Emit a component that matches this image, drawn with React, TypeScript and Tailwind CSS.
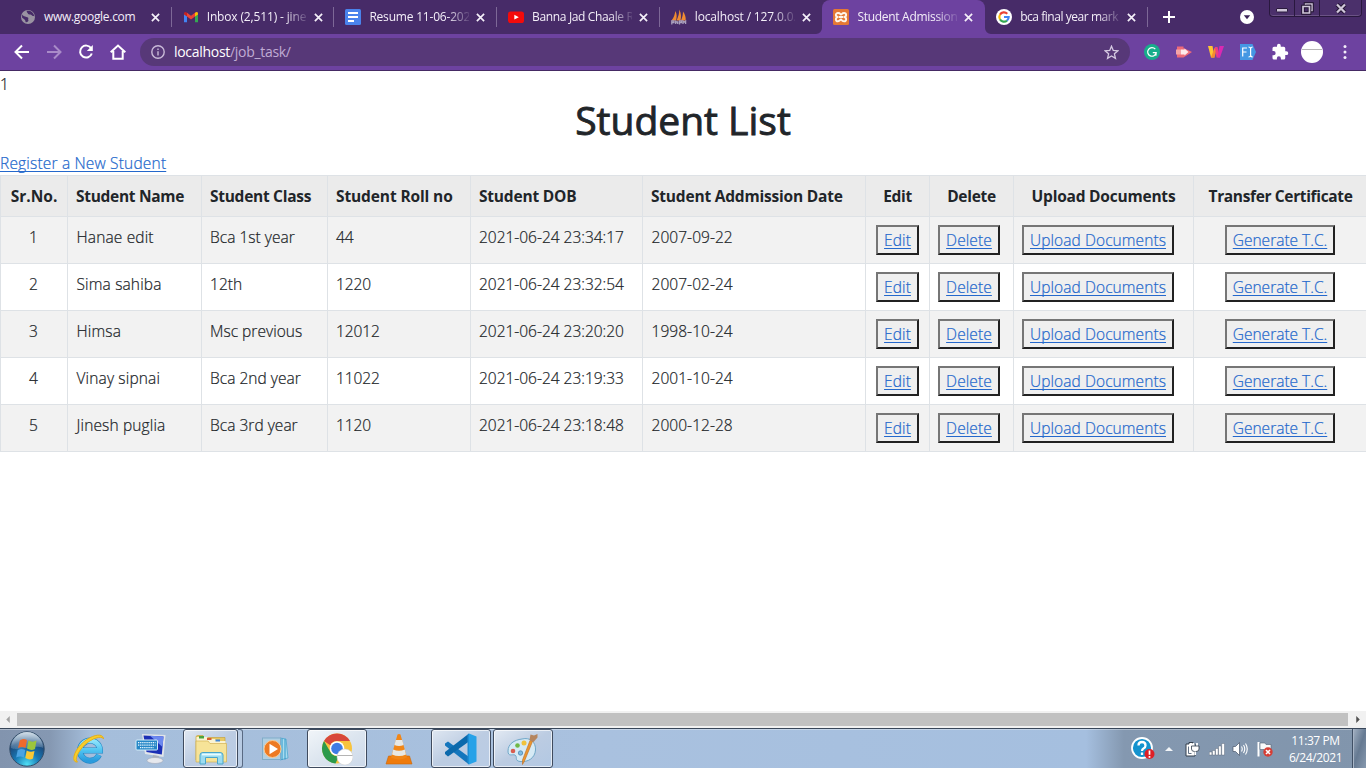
import React from "react";

type IconProps = { className?: string };

const CloseX = () => (
  <svg viewBox="0 0 10 10" className="h-[9px] w-[9px] shrink-0" fill="none" stroke="#f4eff9" strokeWidth="1.9">
    <path d="M1 1L9 9M9 1L1 9" />
  </svg>
);

const Globe = () => (
  <svg viewBox="0 0 16 16" className="h-4 w-4 shrink-0">
    <circle cx="8" cy="8" r="7" fill="#9a93a2" />
    <path d="M2.2 5.5C4 8 6 7.500 8 8.500C9 9.500 7.500 10.500 8.500 11.500C8 13 6.500 13.500 5.500 13C6 11 3.500 10 2 8.500Z" fill="#472b68" />
    <path d="M7 1.800C6 3.500 8 3.500 8 5C9.500 6 10.500 4.500 12 6.500C13 7.500 13.500 6.500 14.300 7.500C14 4 11.500 2 9 1.700Z" fill="#472b68" />
  </svg>
);

const Gmail = () => (
  <svg viewBox="0 0 16 16" className="h-4 w-4 shrink-0">
    <path d="M1 4.500V13.200H4V6.800Z" fill="#4285f4" />
    <path d="M15 4.500V13.200H12V6.800Z" fill="#34a853" />
    <path d="M4 3.800L8 6.800L12 3.800V7.600L8 10.600L4 7.600Z" fill="#ea4335" />
    <path d="M1 4.600C1 2.600 2.800 2.600 4 3.800V7.600L1 5.600Z" fill="#c5221f" />
    <path d="M15 4.600C15 2.600 13.200 2.600 12 3.800V7.600L15 5.600Z" fill="#fbbc04" />
  </svg>
);

const Docs = () => (
  <svg viewBox="0 0 16 16" className="h-4 w-4 shrink-0">
    <rect width="16" height="16" rx="1.5" fill="#4a83ec" />
    <path d="M3 4H13M3 8H13M3 12H9" stroke="#fff" strokeWidth="1.800" />
  </svg>
);

const Youtube = () => (
  <svg viewBox="0 0 16 16" className="h-4 w-4 shrink-0">
    <rect y="2.500" width="16" height="11.500" rx="2.600" fill="#f30b0b" />
    <path d="M6.300 5.800L10.800 8.200L6.300 10.600Z" fill="#fff" />
  </svg>
);

const PhpMyAdmin = () => (
  <svg viewBox="0 0 16 16" className="h-4 w-4 shrink-0">
    <path d="M0.500 11.500C3 8.500 4 5 4.300 2C6 5 6 8 5 11.500ZM5.500 11.500C7.500 7.500 8.300 4 8.300 0.500C10.300 4.500 10.300 8 9.500 11.500ZM10 11.500C11.500 8 12 5 12 2.500C14 5 15 8 14.700 11.500Z" fill="#ef8b32" />
    <path d="M0.800 15.500V12H3V13.700H1M4.700 11.500V15M4.700 13H6.700V15M8.500 15.500V12H10.500V13.700H8.700M12 15V12L13.300 13L14.600 12V15" stroke="#aaa1bd" strokeWidth="1.300" fill="none" />
  </svg>
);

const Xampp = () => (
  <svg viewBox="0 0 16 16" className="h-4 w-4 shrink-0">
    <rect width="16" height="16" rx="1.500" fill="#e57834" />
    <path d="M5.500 8C1.800 8 2.300 4 5 4S7 5.500 8 5.500S9 4 11 4C13.700 4 14.200 8 10.500 8C14.200 8 13.700 12.300 11 12.300S9 10.500 8 10.500S7 12.300 5 12.300C2.300 12.300 1.800 8 5.500 8ZM6 8H10" fill="none" stroke="#fff6ea" strokeWidth="1.900" />
  </svg>
);

const Google = () => (
  <svg viewBox="0 0 16 16" className="h-4 w-4 shrink-0">
    <circle cx="8" cy="8" r="8" fill="#fff" />
    <g fill="none" strokeWidth="2.100">
      <path d="M4 5.600A4.700 4.700 0 0 1 11.300 4.700" stroke="#ea4335" />
      <path d="M4 10.400A4.700 4.700 0 0 1 4 5.600" stroke="#fbbc05" />
      <path d="M11 11.600A4.700 4.700 0 0 1 4 10.400" stroke="#34a853" />
      <path d="M8 8H12.700A4.700 4.700 0 0 1 11 11.600" stroke="#4285f4" />
    </g>
  </svg>
);

type TabInfo = { title: string; icon: React.ReactNode; active?: boolean; tracking: string; noFade?: boolean; noSep?: boolean };

const tabs: TabInfo[] = [
  { title: "www.google.com", icon: <Globe />, tracking: "tracking-[-0.3px]", noFade: true },
  { title: "Inbox (2,511) - jine", icon: <Gmail />, tracking: "tracking-[-0.15px]" },
  { title: "Resume 11-06-202", icon: <Docs />, tracking: "tracking-[-0.2px]" },
  { title: "Banna Jad Chaale R", icon: <Youtube />, tracking: "tracking-[-0.35px]" },
  { title: "localhost / 127.0.0.", icon: <PhpMyAdmin />, tracking: "tracking-[-0.15px]", noSep: true },
  { title: "Student Admission", icon: <Xampp />, tracking: "tracking-[-0.3px]", active: true, noSep: true },
  { title: "bca final year mark", icon: <Google />, tracking: "tracking-[-0.45px]" },
];

function Tab({ tab }: { tab: TabInfo }) {
  return (
    <div className={`relative flex h-[34px] w-[162.7px] shrink-0 items-center pl-[11px] ${tab.active ? "rounded-t-lg bg-[#6d42a0]" : ""}`}>
      {tab.active && (
        <>
          <svg viewBox="0 0 6 6" className="absolute bottom-0 -left-[6px] h-[6px] w-[6px]"><path d="M6 0V6H0A6 6 0 0 0 6 0Z" fill="#6d42a0" /></svg>
          <svg viewBox="0 0 6 6" className="absolute -right-[6px] bottom-0 h-[6px] w-[6px]"><path d="M0 0V6H6A6 6 0 0 1 0 0Z" fill="#6d42a0" /></svg>
        </>
      )}
      {tab.icon}
      <span
        className={`mr-[7px] ml-[8px] w-[100px] text-[12px] leading-4 whitespace-nowrap text-[#f3eef8] ${tab.tracking} ${
          tab.noFade ? "" : "[mask-image:linear-gradient(to_right,black_78%,transparent_103%)]"
        }`}
      >
        {tab.title}
      </span>
      <CloseX />
      {!tab.noSep && <span className="mr-0 ml-auto h-[20px] w-px bg-[#7d6897]" />}
    </div>
  );
}

function TabStrip() {
  return (
    <div className="flex h-[34px] items-center bg-[#472b68] pl-[9px]">
      {tabs.map((t) => <Tab key={t.title} tab={t} />)}
      <svg viewBox="0 0 12 12" className="ml-[15px] h-3 w-3" stroke="#fff" strokeWidth="2"><path d="M6 0V12M0 6H12" /></svg>
      <svg viewBox="0 0 14 14" className="ml-[65px] h-[14px] w-[14px]"><circle cx="7" cy="7" r="7" fill="#fff" /><path d="M3.800 5.300H10.200L7 9.200Z" fill="#3b2358" /></svg>
      <div className="ml-[15.500px] flex h-[17px] w-[93px] self-start rounded-b-[4px] border border-t-0 border-[#29183e] bg-[#4b306b] shadow-[inset_0_-1px_0_#6b5385]">
        <div className="flex w-[25px] items-center justify-center border-r border-[#29183e]">
          <svg viewBox="0 0 12 12" className="h-3 w-3"><rect x="0.500" y="6.500" width="11" height="3.500" rx="0.500" fill="#d0c7da" stroke="#2b1b3e" /></svg>
        </div>
        <div className="flex w-[25px] items-center justify-center border-r border-[#29183e]">
          <svg viewBox="0 0 13 13" className="h-[13px] w-[13px]"><g fill="none"><path d="M4.500 2H11V8.500H4.500Z" stroke="#20132f" strokeWidth="3.500" /><path d="M4.500 2H11V8.500H4.500Z" stroke="#cfc6d9" strokeWidth="1.500" /><path d="M2 4.500H8.500V11H2Z" fill="#472b68" stroke="#20132f" strokeWidth="3.500" /><path d="M2 4.500H8.500V11H2Z" stroke="#cfc6d9" strokeWidth="1.700" /></g></svg>
        </div>
        <div className="flex flex-1 items-center justify-center">
          <svg viewBox="0 0 12 11" className="h-[11px] w-3" fill="none"><path d="M2 1.500L10 9.500M10 1.500L2 9.500" stroke="#20132f" strokeWidth="4" /><path d="M2 1.500L10 9.500M10 1.500L2 9.500" stroke="#d0c7da" strokeWidth="2.300" /></svg>
        </div>
      </div>
    </div>
  );
}

function Toolbar() {
  return (
    <div className="flex h-[37px] items-center border-b border-[#452a64] bg-[#6d42a0]">
      <svg viewBox="0 0 16 16" className="ml-[14px] h-4 w-4" fill="none" stroke="#fff" strokeWidth="2"><path d="M15 8H2M8 1.500L1.500 8L8 14.500" /></svg>
      <svg viewBox="0 0 16 16" className="ml-4 h-4 w-4" fill="none" stroke="#a98bc8" strokeWidth="2"><path d="M1 8H14M8 1.500L14.500 8L8 14.500" /></svg>
      <svg viewBox="0 0 16 16" className="ml-4 h-4 w-4" fill="none" stroke="#fff" strokeWidth="2"><path d="M13.200 4.400A6 6 0 1 0 13.800 9.500" /><path d="M14.800 1V7H8.800Z" fill="#fff" stroke="none" /></svg>
      <svg viewBox="0 0 16 16" className="ml-4 h-4 w-4" fill="none" stroke="#fff" strokeWidth="2"><path d="M0.700 8.300L8 1.500L15.300 8.300M3.300 7V14.700H12.700V7" /></svg>
      <div className="ml-[14px] flex h-7 w-[990px] items-center rounded-full bg-[#573878] pr-[11px] pl-[11px]">
        <svg viewBox="0 0 14 14" className="h-[14px] w-[14px]" fill="none" stroke="#c9bad8" strokeWidth="1.400"><circle cx="7" cy="7" r="6.200" /><path d="M7 6.200V10.500M7 3.500V5" /></svg>
        <span className="ml-[9px] text-[14px] leading-5 tracking-[-0.3px] text-[#fff]">localhost<span className="text-[#c0abd4]">/job_task/</span></span>
        <svg viewBox="0 0 16 16" className="ml-auto h-[15px] w-[15px]" fill="none" stroke="#d5c9e1" strokeWidth="1.400"><path d="M8 1.300L9.900 5.800L14.800 6.200L11.100 9.400L12.200 14.200L8 11.700L3.800 14.200L4.900 9.400L1.200 6.200L6.100 5.800Z" /></svg>
      </div>
      <svg viewBox="0 0 16 16" className="ml-[14px] h-4 w-4"><circle cx="8" cy="8" r="8" fill="#17ad8b" /><path d="M11.300 5.200A4.300 4.300 0 1 0 12.200 8.700H8.800M12.200 8.500L11.900 11.800" fill="none" stroke="#fff" strokeWidth="1.200" /></svg>
      <svg viewBox="0 0 16 16" className="ml-4 h-4 w-4"><path d="M1 2.500H7.500V4L16 8L7.500 13.500H1Z" fill="#ee6a78" /><rect x="0" y="5.500" width="5" height="5" fill="#f5a3a7" /><path d="M5 5.500H8.500V4.500L12.500 8L8.500 11.500V10.500H5Z" fill="#ffe9ea" /></svg>
      <svg viewBox="0 0 16 16" className="ml-4 h-4 w-4"><path d="M0 2H4.500L6.500 13.500H3Z" fill="#ffc531" /><path d="M6.500 13.500L9 4H6.500L3 13.500Z" fill="#f88b2e" /><path d="M6.800 3H9.500L12 13.500H8.500Z" fill="#ee3f7e" /><path d="M11.500 2H16L12 13.500H9.500Z" fill="#d929b2" /></svg>
      <svg viewBox="0 0 16 16" className="ml-4 h-4 w-4"><path d="M0 0H12.500L16 8L12.500 16H0Z" fill="#4597e3" /><path d="M2.700 12.500V4H7M2.700 8H6.500M8.500 3Q10.300 3 10.600 4.500Q11 3 12.700 3M10.600 4.500V12M8.500 13Q10.300 13 10.600 11.500Q11 13 12.700 13" fill="none" stroke="#fff" strokeWidth="1.200" /></svg>
      <svg viewBox="0 0 24 24" className="ml-[15px] h-[18px] w-[18px]" fill="#fff"><path d="M20.500 11H19V7a2 2 0 0 0-2-2h-4V3.500a2.500 2.500 0 0 0-5 0V5H4a2 2 0 0 0-2 2v3.800h1.500a2.700 2.700 0 0 1 0 5.400H2V20a2 2 0 0 0 2 2h3.800v-1.500a2.700 2.700 0 0 1 5.400 0V22H17a2 2 0 0 0 2-2v-4h1.500a2.500 2.500 0 0 0 0-5Z" /></svg>
      <svg viewBox="0 0 22 22" className="ml-3 h-[22px] w-[22px]"><circle cx="11" cy="11" r="11" fill="#fff" /><path d="M1 8.500H21" stroke="#b6b6b6" /></svg>
      <svg viewBox="0 0 4 16" className="ml-[20px] h-4 w-1" fill="#f4eef9"><circle cx="2" cy="2.500" r="1.500" /><circle cx="2" cy="8" r="1.500" /><circle cx="2" cy="13.500" r="1.500" /></svg>
    </div>
  );
}

const students = [
  ["1", "Hanae edit", "Bca 1st year", "44", "2021-06-24 23:34:17", "2007-09-22"],
  ["2", "Sima sahiba", "12th", "1220", "2021-06-24 23:32:54", "2007-02-24"],
  ["3", "Himsa", "Msc previous", "12012", "2021-06-24 23:20:20", "1998-10-24"],
  ["4", "Vinay sipnai", "Bca 2nd year", "11022", "2021-06-24 23:19:33", "2001-10-24"],
  ["5", "Jinesh puglia", "Bca 3rd year", "1120", "2021-06-24 23:18:48", "2000-12-28"],
];

const headers = [
  { label: "Sr.No.", cls: "w-[67px] text-center tracking-[0px]" },
  { label: "Student Name", cls: "w-[134px] text-left tracking-[-0.3px]" },
  { label: "Student Class", cls: "w-[126px] text-left tracking-[-0.28px]" },
  { label: "Student Roll no", cls: "w-[143px] text-left tracking-[-0.12px]" },
  { label: "Student DOB", cls: "w-[172px] text-left tracking-[-0.2px]" },
  { label: "Student Addmission Date", cls: "w-[223px] text-left tracking-[-0.2px]" },
  { label: "Edit", cls: "w-[64px] text-center tracking-[-0.3px]" },
  { label: "Delete", cls: "w-[84px] text-center tracking-[-0.3px]" },
  { label: "Upload Documents", cls: "w-[180px] text-center tracking-[-0.22px]" },
  { label: "Transfer Certificate", cls: "w-[174px] text-center tracking-[-0.35px]" },
];

const columnClasses = [
  "pr-2 pl-[7px] text-center",
  "pr-2 pl-[8.5px] tracking-[0.15px]",
  "px-2 tracking-[0.03px]",
  "px-2 tracking-[-0.1px]",
  "px-2 tracking-[-0.02px]",
  "pr-2 pl-[8.5px] tracking-[0.05px]",
];

const actions = [
  { label: "Edit", width: "w-[43px]", cell: "px-0 text-center tracking-[0.1px]" },
  { label: "Delete", width: "w-[62px]", cell: "pl-2 text-left tracking-[0.1px]" },
  { label: "Upload Documents", width: "w-[152px]", cell: "pl-2 text-left tracking-[0.08px]" },
  { label: "Generate T.C.", width: "w-[110px]", cell: "pr-[1px] text-center" },
];

function StudentTable() {
  return (
    <table className="w-[1367px] table-fixed border-separate border-spacing-0 border-b border-[#dee2e6] text-[15.5px] leading-6 whitespace-nowrap">
      <thead>
        <tr className="h-[41px] bg-[#ebebeb]">
          {headers.map((h) => (
            <th key={h.label} className={`border-t border-l border-[#dee2e6] p-0 font-bold ${h.cls}`}>
              <div className="-mx-1 px-3">{h.label}</div>
            </th>
          ))}
        </tr>
      </thead>
      <tbody>
        {students.map((s) => (
          <tr key={s[0]} className="h-[47px] align-top font-light odd:bg-[#f2f2f2] [-webkit-text-stroke:0.22px_currentColor]">
            {s.map((v, i) => (
              <td key={i} className={`border-t border-l border-[#dee2e6] py-2 ${columnClasses[i]}`}>{v}</td>
            ))}
            {actions.map((a) => (
              <td key={a.label} className={`border-t border-l border-[#dee2e6] py-2 ${a.cell}`}>
                <button className={`inline-flex h-[30px] items-center justify-center border-2 border-t-[#767676] border-r-[#212121] border-b-[#212121] border-l-[#767676] bg-[#efefef] align-top [letter-spacing:inherit] ${a.width}`}>
                  <a className="text-[#2468cc] underline decoration-1 underline-offset-2 [text-decoration-skip-ink:none]">{a.label}</a>
                </button>
              </td>
            ))}
          </tr>
        ))}
      </tbody>
    </table>
  );
}

function Page() {
  return (
    <main className="h-[640px] overflow-hidden bg-white text-[#212529]">
      <p className="h-[25px] pt-px text-[15.5px] leading-6 font-light [-webkit-text-stroke:0.22px_currentColor]">1</p>
      <h1 className="h-[48px] text-center text-[39px] leading-[48px] font-medium [-webkit-text-stroke:0.9px_#212529]">Student List</h1>
      <p className="h-[31px] pt-[7px] text-[15.5px] leading-6 font-light tracking-[0.18px] [-webkit-text-stroke:0.22px_#2468cc]">
        <a className="text-[#2468cc] underline decoration-1 underline-offset-2 [text-decoration-skip-ink:none]">Register a New Student</a>
      </p>
      <StudentTable />
    </main>
  );
}

function ScrollBar() {
  return (
    <div className="flex h-[17px] items-center bg-[#f1f1f1] pl-[6px]">
      <svg viewBox="0 0 4 8" className="h-[7px] w-1" fill="#a3a3a3"><path d="M4 0V8L0 4Z" /></svg>
      <div className="ml-[7px] h-[13px] w-[1331px] bg-[#c1c1c1]" />
      <svg viewBox="0 0 4 8" className="ml-2 h-[7px] w-1" fill="#505050"><path d="M0 0V8L4 4Z" /></svg>
    </div>
  );
}

const StartOrb = () => (
  <svg viewBox="0 0 36 36" className="h-9 w-9">
    <defs>
      <radialGradient id="orb" cx=".5" cy=".95" r=".9"><stop offset="0" stopColor="#4fe0f5" /><stop offset=".4" stopColor="#1879b5" /><stop offset=".75" stopColor="#1c4a7c" /><stop offset="1" stopColor="#7593b1" /></radialGradient>
      <linearGradient id="gloss" x2="0" y2="1"><stop stopColor="#e1ebf2" stopOpacity=".85" /><stop offset="1" stopColor="#a3bdd1" stopOpacity=".25" /></linearGradient>
    </defs>
    <circle cx="18" cy="18" r="17.200" fill="url(#orb)" stroke="#334d68" />
    <path d="M2 17A16 16 0 0 1 34 17C25 13 11 21 2 17Z" fill="url(#gloss)" />
    <path d="M10.800 9.500C13.500 7.500 15.500 7.500 18 9L16.500 17C14 15.500 12 15.800 9 17Z" fill="#ef6a2c" />
    <path d="M19.500 9.500C22 11 25 11 27.500 9.500L26 18C23 19.500 21 19 18 17.500Z" fill="#9cc63c" />
    <path d="M8.700 19C11.500 17.500 14 17.700 16.300 19L14.800 26.500C12 25 10 25.200 7.200 26.500Z" fill="#4ba3e2" />
    <path d="M17.700 19.500C20.500 21 22.500 21.200 25.500 20L24 27.500C21.500 29 19 28.500 16.300 27Z" fill="#fbc834" />
  </svg>
);

const Explorer = () => (
  <svg viewBox="0 0 32 32" className="h-8 w-8">
    <defs><linearGradient id="ie" x2="0" y2="1"><stop stopColor="#8fe4fb" /><stop offset=".5" stopColor="#4fc3f0" /><stop offset="1" stopColor="#2a9bdd" /></linearGradient></defs>
    <path d="M26 22A10 10 0 1 1 27 17.500H9" fill="none" stroke="#2386c4" strokeWidth="6" />
    <path d="M26 22A10 10 0 1 1 27 17.500H9" fill="none" stroke="url(#ie)" strokeWidth="4.800" />
    <path d="M4.500 29C-2 30 0 18 10.500 9C20 1 30.500 0 30.500 6C29.500 2.500 20 4.500 12 11.500C5 18.500 1 27 4.500 29Z" fill="#f9ce27" stroke="#e4ae1b" strokeWidth="1" />
  </svg>
);

const Keyboard = () => (
  <svg viewBox="0 0 32 32" className="h-8 w-8">
    <path d="M7 1L30.500 2L28.500 24L10 21Z" fill="#e1e4e8" />
    <path d="M8.500 2.500L28.500 3.500L26.800 21.500L11.500 19Z" fill="#1b2fb5" />
    <path d="M15 2.800L28.500 3.500L27.500 14Z" fill="#6c89f0" />
    <path d="M18 22L24 23L23 27L17 26Z" fill="#aab1bc" />
    <ellipse cx="20" cy="27.500" rx="8" ry="3" fill="#e6e8ed" stroke="#a2aab8" strokeWidth=".6" />
    <rect x="1" y="7" width="21.500" height="10" rx="1" fill="#2587c7" stroke="#d2edfa" />
    <path d="M3 9.700H20.500M3 12.200H20.500M5 14.700H18.500" stroke="#f0fbff" strokeWidth="1.300" strokeDasharray="1.300 .8" />
  </svg>
);

const FolderIcon = () => (
  <svg viewBox="0 0 32 32" className="h-8 w-8">
    <path d="M1 4Q1 2.500 3 2.500H8L9 4.500H30V27H1Z" fill="#e8c964" stroke="#c7a33e" strokeWidth=".7" />
    <path d="M1.500 4H12L13.500 6H20L21.500 8H30.500V12H1.500Z" fill="#faf3d2" />
    <path d="M4 3H9V5.500H4Z" fill="#4aa53e" /><path d="M12 5H16.500V7H12Z" fill="#d85c30" /><path d="M20.500 6.500H25V8.500H20.500Z" fill="#4387d4" />
    <path d="M1 8H13L15 10.500H31.500V29H1Z" fill="#f6e398" stroke="#d4b252" strokeWidth=".7" />
    <path d="M5 31V22Q5 19.500 8 19.500H25Q28 19.500 28 22V31H22.500V24.500H10.500V31Z" fill="#9bdcf1" stroke="#4ba6ca" />
    <path d="M7 21.500H26" stroke="#e8fbff" strokeWidth="1.800" />
  </svg>
);

const MediaPlayer = () => (
  <svg viewBox="0 0 32 32" className="h-8 w-8">
    <path d="M21 5L27 6L29 25L21 27Z" fill="#a7dbef" stroke="#44a2cc" strokeWidth=".7" />
    <path d="M23 5.500V27M26 6V26.500" stroke="#2891c4" strokeWidth=".9" />
    <rect x="3.500" y="5" width="18" height="21.500" fill="#b1cfe2" stroke="#80adc9" />
    <circle cx="13.500" cy="16" r="8.500" fill="#ed7a23" stroke="#fbca91" />
    <path d="M10.500 10.800L19 16L10.500 21.200Z" fill="#fff" />
  </svg>
);

const Chrome = () => (
  <svg viewBox="0 0 32 32" className="h-8 w-8">
    <circle cx="16" cy="15.500" r="15" fill="#f8c33d" />
    <path d="M3 8A15 15 0 0 1 29 8H16A7.500 7.500 0 0 0 9.300 12.300Z" fill="#d8483b" />
    <path d="M3 8L9.500 19.300A7.500 7.500 0 0 0 18 22.700L14.500 30.500A15 15 0 0 1 3 8Z" fill="#2c9a4b" />
    <circle cx="16" cy="15.500" r="7.300" fill="#fff" /><circle cx="16" cy="15.500" r="5.800" fill="#3e7ce4" />
    <circle cx="24" cy="24" r="8" fill="#fff" stroke="#c9c9c9" strokeWidth=".5" /><path d="M16.500 22.500H31.500" stroke="#b4b4b4" />
  </svg>
);

const Vlc = () => (
  <svg viewBox="0 0 32 32" className="h-8 w-8">
    <path d="M5.500 23H26.500L29 31H3Z" fill="#ef7b0c" stroke="#c96708" strokeWidth=".6" />
    <path d="M14.500 1.500Q16 .500 17.500 1.500L24 24.500Q16 28.500 8 24.500Z" fill="#f18617" />
    <path d="M12.800 7H19.200L20.600 12Q16 14 11.400 12Z" fill="#e8e8e4" /><path d="M10.200 16.500Q16 19 21.800 16.500L23 21.500Q16 24.500 9 21.500Z" fill="#e8e8e4" />
  </svg>
);

const VsCode = () => (
  <svg viewBox="0 0 32 32" className="h-8 w-8">
    <path d="M0 10.500L3 8.500L24 24V31.500L0 12.500Z" fill="#1476bd" />
    <path d="M0 21L3 23.500L24 8.500V.500L0 19Z" fill="#0b69ac" />
    <path d="M24 .500L31.500 3.500V28.500L24 31.500Z" fill="#27a2e8" /><path d="M24 .500L22.500 2V30L24 31.500Z" fill="#1d8ed5" />
  </svg>
);

const Paint = () => (
  <svg viewBox="0 0 32 32" className="h-8 w-8">
    <path d="M15 6C23 4 29 9 28.500 17C28 25 21 29.500 13 28.500C7 27.500 11 24 8 22C5 21 1 24 1 18C1 11 7 7 15 6Z" fill="#d6eaf5" stroke="#6fa7c8" />
    <circle cx="6" cy="18" r="2.300" fill="#d85d50" /><circle cx="10.500" cy="12.500" r="2.300" fill="#70b847" /><circle cx="17" cy="10" r="2.500" fill="#f0c33d" /><circle cx="13.500" cy="20" r="2.200" fill="#7fbbe0" stroke="#4c88b3" strokeWidth=".8" />
    <path d="M25.500 8.500L17.500 28L15.500 31.500L15.500 27L23 7.500Z" fill="#ec962f" stroke="#ba6c21" strokeWidth=".6" />
    <path d="M22.500 7L23.500 1.500L27 2.500L30.500 1L30.500 4.500L26.500 9Z" fill="#b5855f" />
  </svg>
);

function TaskButton({ children, open, className = "" }: { children: React.ReactNode; open?: boolean } & IconProps) {
  return (
    <div
      className={`flex h-[39px] shrink-0 items-center justify-center ${
        open ? "rounded-[3px] border border-[#3f4b5e] bg-linear-to-br shadow-[inset_0_0_0_1px_rgba(255,255,255,0.65)]" : ""
      } ${className}`}
    >
      {children}
    </div>
  );
}

function Taskbar() {
  return (
    <footer className="flex h-10 items-center border-t border-[#384659] bg-[linear-gradient(90deg,#8294ae_0px,#8598b2_50px,#a5bedb_90px,#a9c1df_600px,#a5bfdf_1086px,#8498b0_1124px,#8195ac_1366px)] shadow-[inset_0_1px_0_rgba(255,255,255,0.35)]">
      <TaskButton className="ml-[9px] w-9"><StartOrb /></TaskButton>
      <TaskButton className="ml-[12px] w-16"><Explorer /></TaskButton>
      <TaskButton className="w-[60px]"><Keyboard /></TaskButton>
      <div className="ml-[2px] flex w-[60px]">
        <TaskButton open className="w-[55px] from-[#dfe7f1] via-[#bccce2] to-[#b9cce5]"><FolderIcon /></TaskButton>
        <span className="h-[39px] w-[5px] rounded-r-[3px] border border-l-0 border-[#596a83] bg-[#b8cbe3]" />
      </div>
      <TaskButton className="w-[64px]"><MediaPlayer /></TaskButton>
      <TaskButton open className="w-[60px] from-[#f1f5f9] via-[#dce5ef] to-[#ccd9ea]"><Chrome /></TaskButton>
      <TaskButton className="w-[64px]"><Vlc /></TaskButton>
      <TaskButton open className="w-[60px] from-[#dfe7f1] via-[#bccce2] to-[#b9cce5]"><VsCode /></TaskButton>
      <TaskButton open className="ml-[2px] w-[60px] from-[#e3eaf3] via-[#bccce2] to-[#b2c8e3]"><Paint /></TaskButton>
      <div className="ml-auto flex items-center">
        <svg viewBox="0 0 24 24" className="h-6 w-6"><circle cx="11" cy="11" r="10" fill="#1593ce" stroke="#fff" strokeWidth="1.800" /><path d="M7.500 8.500Q7.500 5 11 5T14.500 8.500Q14.500 10.500 12.500 11.500Q11 12.300 11 14M11 15.500V18" fill="none" stroke="#fff" strokeWidth="2.300" /><circle cx="18.500" cy="17" r="5" fill="#df1f26" /><path d="M18.500 13.500V17.800M18.500 19V20.700" stroke="#fff" strokeWidth="1.700" /></svg>
        <svg viewBox="0 0 8 4" className="ml-[10px] h-1 w-2"><path d="M0 4L4 0L8 4Z" fill="#f2f5f8" /></svg>
        <svg viewBox="0 0 16 16" className="ml-[11px] h-4 w-4"><path d="M2 3H5V1.500H9V3H11V15H2Z" fill="#fff" stroke="#333f4d" /><path d="M4.500 5.500V12.500H7.500" fill="none" stroke="#647285" /><path d="M9.500 2V5M13 2V5" stroke="#fff" strokeWidth="1.800" /><path d="M7.500 5H15V8Q15 10.500 12 10.500H10.500Q7.500 10.500 7.500 8Z" fill="#fff" stroke="#2f3b49" strokeWidth=".8" /><path d="M11.300 10.500V14" stroke="#fff" strokeWidth="1.500" /></svg>
        <svg viewBox="0 0 16 14" className="ml-[9px] h-[14px] w-4"><g fill="#fff" stroke="#4b596b" strokeWidth=".4"><path d="M.300 10H2.900V13H.300ZM3.400 8.500H6V13H3.400ZM6.500 6.500H9.100V13H6.500ZM9.600 4H12.200V13H9.600ZM12.700 1.500H15.500V13H12.700Z" /></g></svg>
        <svg viewBox="0 0 16 16" className="ml-[7px] h-4 w-4"><path d="M1 5.500H3.500L7.500 1.500V14.500L3.500 10.500H1Z" fill="#fff" stroke="#475568" strokeWidth=".7" /><path d="M9.500 5.500Q11 8 9.500 10.500M11.500 4Q14 8 11.500 12M13.500 2.500Q17 8 13.500 13.500" fill="none" stroke="#fff" strokeWidth="1.100" /></svg>
        <svg viewBox="0 0 18 16" className="ml-[9px] h-4 w-[18px]"><path d="M1.500 1V15.500" stroke="#fff" strokeWidth="2" /><path d="M3 2H8L9 3.500H14V10H8L7 8.500H3Z" fill="#f8fafb" stroke="#536174" strokeWidth=".6" /><circle cx="11" cy="11" r="4.700" fill="#d63d34" /><path d="M9 9L13 13M13 9L9 13" stroke="#fff" strokeWidth="1.600" /></svg>
        <div className="ml-[8px] w-[65px] text-center text-[12px] leading-[17px] tracking-[-0.4px] text-white"><div>11:37 PM</div><div>6/24/2021</div></div>
        <div className="ml-[4px] h-[39px] w-[14px] border-l border-[#405065] bg-linear-to-br from-[#a3b1c2] via-[#667a92] to-[#8799ae] shadow-[inset_1px_0_0_#a8b5c6]" />
      </div>
    </footer>
  );
}

export default function App() {
  return (
    <div className="flex h-[768px] w-[1366px] flex-col overflow-hidden bg-white font-['Open_Sans','Noto_Sans',sans-serif]">
      <TabStrip />
      <Toolbar />
      <Page />
      <ScrollBar />
      <Taskbar />
    </div>
  );
}
